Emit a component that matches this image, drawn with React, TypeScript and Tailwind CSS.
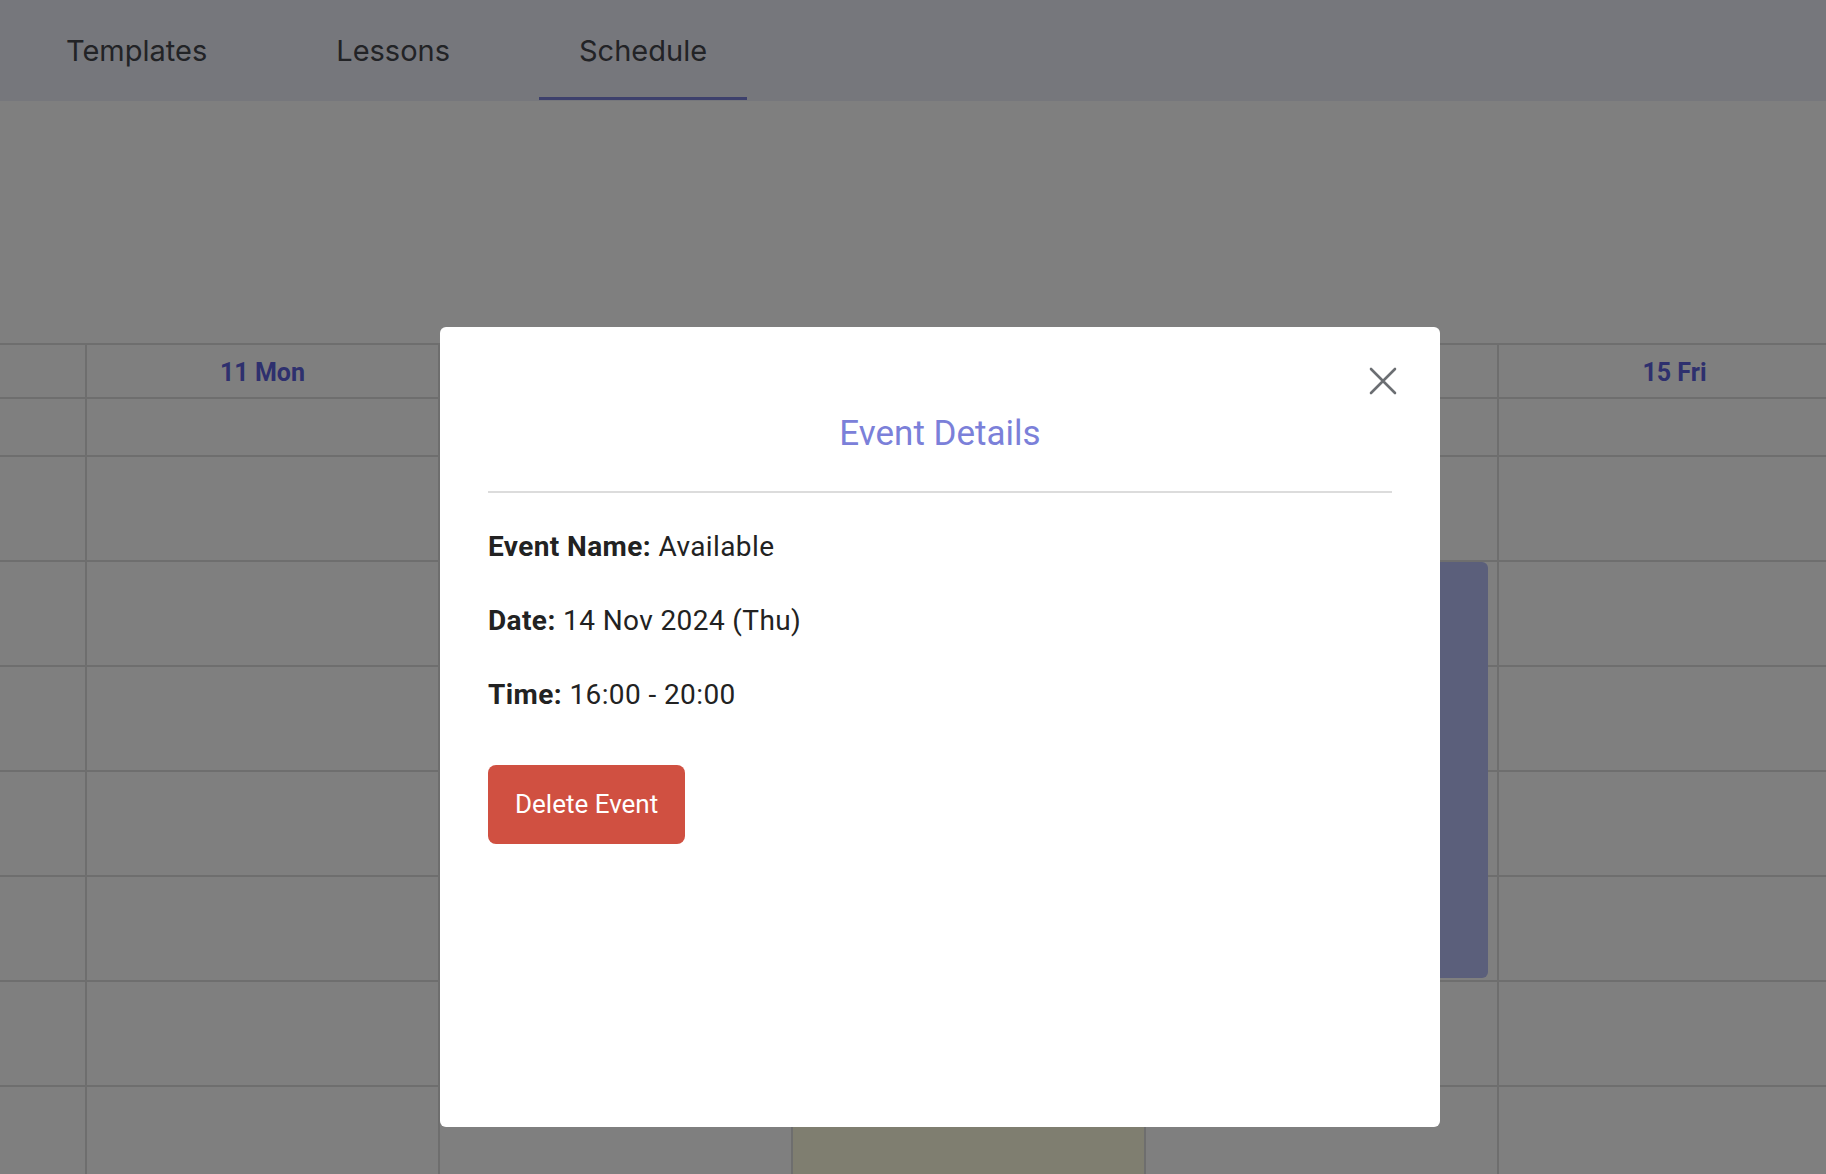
import { Fragment } from "react";

type Day = { label: string; today?: boolean };

const days: Day[] = [
  { label: "11 Mon" },
  { label: "12 Tue" },
  { label: "13 Wed", today: true },
  { label: "14 Thu" },
  { label: "15 Fri" },
];

const tabs = ["Templates", "Lessons", "Schedule"];
const rows = 8;

function CloseIcon() {
  return (
    <svg width="28" height="28" viewBox="0 0 28 28" fill="none">
      <path
        d="M2 2 L26 26 M26 2 L2 26"
        stroke="#6b6e72"
        strokeWidth="2.6"
        strokeLinecap="round"
      />
    </svg>
  );
}

export default function App() {
  return (
    <div className="relative w-full h-[1174px] overflow-hidden bg-white font-['Roboto',sans-serif]">
      {/* tab bar */}
      <div className="h-[101px] bg-[#eceef8] flex items-start pl-[26px] gap-[49px]">
        {tabs.map((t) => (
          <div
            key={t}
            className={
              "h-[100px] px-10 pt-[4px] flex items-center border-b-[3px] text-[29px] text-[#45464d] font-['Inter',sans-serif] " +
              (t === "Schedule" ? "border-[#7b80d9]" : "border-transparent")
            }
          >
            {t}
          </div>
        ))}
      </div>

      {/* calendar */}
      <div className="mt-[242px] relative w-[1850px]">
        <div className="grid grid-cols-[87px_353px_353px_353px_353px_353px] border-t-2 border-[#dcdcdc]">
          <div className="h-[54px] border-r-2 border-b-2 border-[#dcdcdc]" />
          {days.map((d) => (
            <div
              key={d.label}
              className={
                "h-[54px] pt-[3px] border-r-2 border-b-2 border-[#dcdcdc] flex items-center justify-center text-[25px] font-bold text-[#5c60dc] " +
                (d.today ? "bg-[#fefce0]" : "")
              }
            >
              {d.label}
            </div>
          ))}
          <div className="h-[58px] border-r-2 border-b-2 border-[#dcdcdc]" />
          {days.map((d) => (
            <div
              key={"a" + d.label}
              className={"h-[58px] border-r-2 border-b-2 border-[#dcdcdc] " + (d.today ? "bg-[#fefce0]" : "")}
            />
          ))}
          {Array.from({ length: rows }).map((_, r) => (
            <Fragment key={r}>
              <div className="h-[105px] border-r-2 border-b-2 border-[#dcdcdc]" />
              {days.map((d) => (
                <div
                  key={d.label}
                  className={"h-[105px] border-r-2 border-b-2 border-[#dcdcdc] " + (d.today ? "bg-[#fefce0]" : "")}
                />
              ))}
            </Fragment>
          ))}
        </div>
        {/* event: 14 Thu 16:00 - 20:00 */}
        <div className="absolute left-[1147px] top-[219px] w-[341px] h-[416px] rounded-md bg-[#b6bef6]" />
      </div>

      {/* overlay */}
      <div className="absolute inset-0 bg-black/50" />

      {/* modal */}
      <div className="absolute left-[440px] top-[327px] w-[1000px] h-[800px] bg-white rounded-md px-12">
        <button className="absolute right-[43px] top-[40px]">
          <CloseIcon />
        </button>
        <h2 className="pt-[89px] text-center text-[35px] leading-[36px] text-[#7b80d9]">Event Details</h2>
        <div className="mt-[39px] h-[2px] bg-[#dcdcdc]" />
        <div className="mt-[38px] flex flex-col gap-[42px] text-[28px] leading-[32px] tracking-[0.4px] text-[#222]">
          <p>
            <span className="font-bold">Event Name:</span> Available
          </p>
          <p>
            <span className="font-bold">Date:</span> 14 Nov 2024 (Thu)
          </p>
          <p>
            <span className="font-bold">Time:</span> 16:00 - 20:00
          </p>
        </div>
        <button className="mt-[54px] h-[79px] px-[27px] rounded-lg bg-[#d05041] text-white text-[26px]">
          Delete Event
        </button>
      </div>
    </div>
  );
}
